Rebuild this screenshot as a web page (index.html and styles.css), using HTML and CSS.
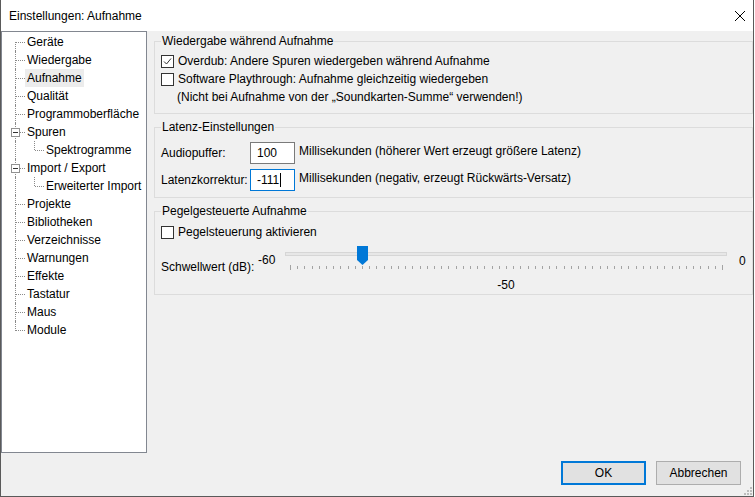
FILE: index.html
```html
<!DOCTYPE html>
<html lang="de">
<head>
<meta charset="utf-8">
<title>Einstellungen: Aufnahme</title>
<link rel="stylesheet" href="styles.css">
</head>
<body>
<div class="window">
  <div class="titlebar">
    <span class="title">Einstellungen: Aufnahme</span>
    <svg class="close" width="10" height="10" viewBox="0 0 10 10"><path d="M0 0L10 10M10 0L0 10" stroke="#000" stroke-width="1"/></svg>
  </div>
  <div class="main">
    <ul class="tree">
      <li class="node first"><span class="lbl">Geräte</span></li>
      <li class="node"><span class="lbl">Wiedergabe</span></li>
      <li class="node"><span class="lbl selected">Aufnahme</span></li>
      <li class="node"><span class="lbl">Qualität</span></li>
      <li class="node"><span class="lbl">Programmoberfläche</span></li>
      <li class="node"><span class="exp"></span><span class="lbl">Spuren</span></li>
      <li class="node child"><span class="branch"></span><span class="lbl">Spektrogramme</span></li>
      <li class="node"><span class="exp"></span><span class="lbl">Import / Export</span></li>
      <li class="node child"><span class="branch"></span><span class="lbl">Erweiterter Import</span></li>
      <li class="node"><span class="lbl">Projekte</span></li>
      <li class="node"><span class="lbl">Bibliotheken</span></li>
      <li class="node"><span class="lbl">Verzeichnisse</span></li>
      <li class="node"><span class="lbl">Warnungen</span></li>
      <li class="node"><span class="lbl">Effekte</span></li>
      <li class="node"><span class="lbl">Tastatur</span></li>
      <li class="node"><span class="lbl">Maus</span></li>
      <li class="node last"><span class="lbl">Module</span></li>
    </ul>
    <div class="pages">
      <fieldset class="group g1">
        <legend>Wiedergabe während Aufnahme</legend>
        <div class="cb-row">
          <span class="cb"><svg width="11" height="11" viewBox="0 0 11 11"><path d="M2 5.5L4.5 8L9 2.5" fill="none" stroke="#333" stroke-width="1"/></svg></span>
          <span>Overdub: Andere Spuren wiedergeben während Aufnahme</span>
        </div>
        <div class="cb-row">
          <span class="cb"></span>
          <span>Software Playthrough: Aufnahme gleichzeitig wiedergeben</span>
        </div>
        <div class="note">(Nicht bei Aufnahme von der „Soundkarten-Summe“ verwenden!)</div>
      </fieldset>
      <fieldset class="group g2">
        <legend>Latenz-Einstellungen</legend>
        <div class="latency">
          <span class="lat-label">Audiopuffer:</span>
          <span class="field">100</span>
          <span class="lat-text">Millisekunden (höherer Wert erzeugt größere Latenz)</span>
          <span class="lat-label">Latenzkorrektur:</span>
          <span class="field focused">-111<span class="caret"></span></span>
          <span class="lat-text">Millisekunden (negativ, erzeugt Rückwärts-Versatz)</span>
        </div>
      </fieldset>
      <fieldset class="group g3">
        <legend>Pegelgesteuerte Aufnahme</legend>
        <div class="cb-row">
          <span class="cb"></span>
          <span>Pegelsteuerung aktivieren</span>
        </div>
        <div class="slider-row">
          <span class="sl-label">Schwellwert (dB):</span>
          <span class="sl-min">-60</span>
          <div class="slider">
            <div class="track-area">
              <div class="track"></div>
              <svg class="ticks" width="434" height="5" viewBox="0 0 434 5"><path d="M0.5 0v5M7.5 1v3M14.5 1v3M22.5 1v3M29.5 1v3M36.5 1v3M43.5 1v3M50.5 1v3M58.5 1v3M65.5 1v3M72.5 1v3M79.5 1v3M86.5 1v3M94.5 1v3M101.5 1v3M108.5 1v3M115.5 1v3M122.5 1v3M130.5 1v3M137.5 1v3M144.5 1v3M151.5 1v3M158.5 1v3M166.5 1v3M173.5 1v3M180.5 1v3M187.5 1v3M194.5 1v3M202.5 1v3M209.5 1v3M216.5 1v3M223.5 1v3M230.5 1v3M238.5 1v3M245.5 1v3M252.5 1v3M259.5 1v3M266.5 1v3M274.5 1v3M281.5 1v3M288.5 1v3M295.5 1v3M302.5 1v3M310.5 1v3M317.5 1v3M324.5 1v3M331.5 1v3M338.5 1v3M346.5 1v3M353.5 1v3M360.5 1v3M367.5 1v3M374.5 1v3M382.5 1v3M389.5 1v3M396.5 1v3M403.5 1v3M410.5 1v3M418.5 1v3M425.5 1v3M432.5 0v5" stroke="#a3a3a3" stroke-width="1" shape-rendering="crispEdges"/></svg>
              <svg class="thumb" width="11" height="19" viewBox="0 0 11 19"><path d="M0 0H11V14L5.5 19L0 14Z" fill="#0078d7"/></svg>
            </div>
            <div class="sl-value">-50</div>
          </div>
          <span class="sl-max">0</span>
        </div>
      </fieldset>
    </div>
  </div>
  <div class="buttons">
    <button class="btn default">OK</button>
    <button class="btn">Abbrechen</button>
  </div>
  <svg class="grip" width="8" height="8" viewBox="0 0 8 8"><path d="M6 0h2v2h-2zM3 3h2v2h-2zM6 3h2v2h-2zM0 6h2v2h-2zM3 6h2v2h-2zM6 6h2v2h-2z" fill="#bdbdbd"/></svg>
</div>
</body>
</html>
```

FILE: styles.css
```css
html, body {
  margin: 0;
  padding: 0;
  background: #ffffff;
}

body {
  font-family: "Liberation Sans", Arial, sans-serif;
  font-size: 12px;
  color: #000;
}

.window {
  position: relative;
  width: 754px;
  height: 497px;
  box-sizing: border-box;
  border: 1px solid #5a5a5a;
  border-top: 0;
  background: #f0f0f0;
  display: flex;
  flex-direction: column;
}

.titlebar {
  height: 31px;
  flex: none;
  background: #fff;
  display: flex;
  align-items: center;
  justify-content: space-between;
  padding: 0 8px;
}

.title {
  line-height: 16px;
}

.main {
  display: flex;
  height: 422px;
  flex: none;
}

/* ---------- tree ---------- */
.tree {
  list-style: none;
  margin: 0;
  padding: 1px 0 0;
  width: 146px;
  height: 422px;
  box-sizing: border-box;
  border: 1px solid #828790;
  background: #fff;
  flex: none;
}

.node {
  position: relative;
  height: 18px;
  line-height: 18px;
  padding-left: 23px;
  white-space: nowrap;
}

.node::before {
  content: "";
  position: absolute;
  left: 13px;
  top: 0;
  height: 18px;
  border-left: 1px dotted #8a8a8a;
}

.node.first::before {
  top: 9px;
  height: 9px;
}

.node.last::before {
  height: 10px;
}

.node::after {
  content: "";
  position: absolute;
  left: 14px;
  top: 9px;
  width: 9px;
  border-top: 1px dotted #8a8a8a;
}

.node.child {
  padding-left: 42px;
}

.node.child::after {
  left: 33px;
}

.branch {
  position: absolute;
  left: 32px;
  top: 0;
  height: 9px;
  border-left: 1px dotted #8a8a8a;
}

.exp {
  position: absolute;
  left: 9px;
  top: 5px;
  width: 9px;
  height: 9px;
  box-sizing: border-box;
  border: 1px solid #919191;
  background: #fff;
  z-index: 1;
}

.exp::after {
  content: "";
  position: absolute;
  left: 1px;
  top: 3px;
  width: 5px;
  height: 1px;
  background: #333;
}

.lbl {
  display: inline-block;
  padding: 0 2px;
  height: 18px;
}

.lbl.selected {
  background: #ececec;
}

/* ---------- pages ---------- */
.pages {
  flex: 1;
  margin: 2px 1px 0 7px;
  display: flex;
  flex-direction: column;
  gap: 5px;
}

.group {
  margin: 0;
  padding: 0 6px;
  border: 1px solid #dcdcdc;
  min-width: 0;
}

.group legend {
  padding: 0 1px;
  line-height: 16px;
}

.g1 {
  padding-top: 3px;
  padding-bottom: 7px;
}

.g2 {
  padding-top: 7px;
  padding-bottom: 6px;
}

.g3 {
  padding-top: 4px;
  padding-bottom: 1px;
}

.cb-row {
  display: flex;
  align-items: center;
  height: 18px;
  gap: 4px;
}

.cb {
  width: 13px;
  height: 13px;
  box-sizing: border-box;
  border: 1px solid #333;
  background: #fff;
  display: flex;
  align-items: center;
  justify-content: center;
  flex: none;
}

.note {
  height: 18px;
  line-height: 18px;
  padding-left: 16px;
}

/* latency */
.latency {
  display: grid;
  grid-template-columns: 89px 45px auto;
  grid-auto-rows: 22px;
  row-gap: 5px;
  column-gap: 0;
}

.lat-label {
  align-self: center;
  line-height: 16px;
}

.field {
  box-sizing: border-box;
  height: 22px;
  border: 1px solid #7a7a7a;
  background: #fff;
  padding-left: 6px;
  line-height: 20px;
  display: flex;
  align-items: center;
}

.field.focused {
  border-color: #0078d7;
}

.caret {
  width: 1px;
  height: 14px;
  background: #000;
  margin-left: 1px;
}

.lat-text {
  padding-left: 4px;
  line-height: 18px;
}

/* slider */
.slider-row {
  display: flex;
  align-items: flex-start;
  margin-top: 5px;
}

.sl-label {
  line-height: 16px;
  margin-top: 13px;
  width: 97px;
  flex: none;
}

.sl-min {
  line-height: 16px;
  margin-top: 6px;
  width: 27px;
  flex: none;
}

.slider {
  width: 442px;
  flex: none;
}

.track-area {
  position: relative;
  height: 26px;
  padding-top: 6px;
  box-sizing: border-box;
}

.track {
  height: 4px;
  box-sizing: border-box;
  border: 1px solid #d6d6d6;
  background: #e7e7e7;
}

.ticks {
  display: block;
  margin: 9px 0 0 5px;
}

.thumb {
  position: absolute;
  left: 72px;
  top: 0;
}

.sl-value {
  text-align: center;
  line-height: 16px;
  margin-top: 5px;
}

.sl-max {
  line-height: 16px;
  margin-top: 7px;
  margin-left: 12px;
}

/* buttons */
.buttons {
  display: flex;
  justify-content: flex-end;
  gap: 10px;
  padding: 8px 12px 0 0;
}

.btn {
  width: 85px;
  height: 24px;
  box-sizing: border-box;
  margin: 0;
  padding: 0;
  background: #e1e1e1;
  border: 1px solid #adadad;
  font-family: "Liberation Sans", Arial, sans-serif;
  font-size: 12px;
  color: #000;
}

.btn.default {
  border: 2px solid #0078d7;
}

.grip {
  position: absolute;
  right: 1px;
  bottom: 1px;
}
```
